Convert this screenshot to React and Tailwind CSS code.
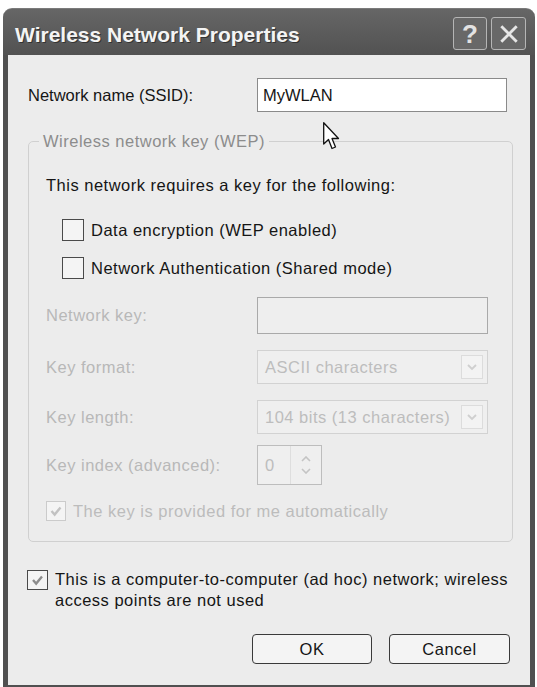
import React from "react";

const font = "font-['Liberation_Sans',Arial,sans-serif]";

const Check = ({ color }) => (
  <svg viewBox="0 0 20 20" className="h-full w-full">
    <polyline points="5,10 8.5,14 15,6" fill="none" stroke={color} strokeWidth="2.6" />
  </svg>
);

const CheckBox = ({ checked, disabled, className }) => (
  <div
    className={
      "shrink-0 border bg-[#f4f4f4] " +
      (disabled ? "border-[#cbcbcb] " : "border-[#4a4a4a] ") +
      className
    }
  >
    {checked && <Check color={disabled ? "#c2c2c2" : "#8c8c8c"} />}
  </div>
);

const Chevron = () => (
  <svg viewBox="0 0 12 8" className="h-[8px] w-[12px]">
    <polyline points="2,2 6,6 10,2" fill="none" stroke="#cfcfcf" strokeWidth="1.8" />
  </svg>
);

const DisabledSelect = ({ value, h }) => (
  <div className={"flex w-[231px] items-center justify-between border border-[#d2d2d2] bg-[#efefef] pl-[7px] pr-[4px] " + h}>
    <span className="text-[#bdbdbd]">{value}</span>
    <div className="flex h-[24px] w-[22px] items-center justify-center border border-[#dcdcdc] bg-[#f3f3f3]">
      <Chevron />
    </div>
  </div>
);

export default function App() {
  return (
    <div className={"relative min-h-[687px] bg-white pl-[3px] pt-[8px] text-[16.5px] text-[#151515] " + font}>
      <div className="flex h-[679px] w-[532px] flex-col">
        {/* title bar */}
        <div className="flex h-[47px] shrink-0 items-start justify-between rounded-t-[9px] border-t border-[#7a7a7a] bg-gradient-to-b from-[#666666] to-[#525252] pl-[12px] pr-[9px]">
          <span className="mt-[14px] text-[21px] font-bold leading-[24px] text-[#f4f4f4] [text-shadow:1px_1px_0_#333]">
            Wireless Network Properties
          </span>
          <div className="mt-[8px] flex gap-[4px]">
            <div className="flex h-[33px] w-[34px] items-center justify-center rounded-[3px] border border-[#b5b5b5] bg-[#686868] text-[26px] font-bold leading-none text-[#e2e2e2]">
              ?
            </div>
            <div className="flex h-[33px] w-[35px] items-center justify-center rounded-[3px] border border-[#b5b5b5] bg-[#686868]">
              <svg viewBox="0 0 20 20" className="h-[22px] w-[22px]">
                <path d="M3 3 L17 17 M17 3 L3 17" stroke="#e6e6e6" strokeWidth="2.6" />
              </svg>
            </div>
          </div>
        </div>

        {/* body */}
        <div className="flex flex-1 flex-col border-x-[5px] border-b-[2px] border-[#505050] bg-[#ececec] tracking-[0.5px]">
          <div className="mt-[23px] flex items-center pl-[20px]">
            <span className="w-[229px] tracking-normal">Network name (SSID):</span>
            <div className="flex h-[34px] w-[250px] items-center border border-[#8a8a8a] bg-white pl-[5px] tracking-normal">
              MyWLAN
            </div>
          </div>

          <fieldset className="ml-[20px] mr-[17px] mt-[19px] rounded-[5px] border border-[#d0d0d0]">
            <legend className="ml-[10px] px-[4px] leading-[20px] text-[#8c8c8c]">
              Wireless network key (WEP)
            </legend>
            <div className="flex flex-col pb-[20px] pl-[17px] pr-[24px]">
              <p className="mt-[24px] leading-[20px]">This network requires a key for the following:</p>

              <div className="mt-[24px] flex h-[22px] items-center gap-[7px] pl-[16px]">
                <CheckBox className="h-[22px] w-[22px]" />
                <span>Data encryption (WEP enabled)</span>
              </div>
              <div className="mt-[16px] flex h-[22px] items-center gap-[7px] pl-[16px]">
                <CheckBox className="h-[22px] w-[22px]" />
                <span>Network Authentication (Shared mode)</span>
              </div>

              <div className="mt-[18px] flex h-[37px] items-center">
                <span className="w-[211px] text-[#b8b8b8]">Network key:</span>
                <div className="h-full w-[231px] border border-[#a9a9a9] bg-[#eeeeee]" />
              </div>

              <div className="mt-[16px] flex items-center">
                <span className="w-[211px] text-[#b8b8b8]">Key format:</span>
                <DisabledSelect value="ASCII characters" h="h-[34px]" />
              </div>

              <div className="mt-[16px] flex items-center">
                <span className="w-[211px] text-[#b8b8b8]">Key length:</span>
                <DisabledSelect value="104 bits (13 characters)" h="h-[34px]" />
              </div>

              <div className="mt-[11px] flex items-center">
                <span className="w-[211px] text-[#b8b8b8]">Key index (advanced):</span>
                <div className="flex h-[40px] w-[65px] items-center border border-[#bdbdbd] bg-[#efefef]">
                  <span className="w-[32px] pl-[7px] text-[#bdbdbd]">0</span>
                  <div className="flex h-full flex-1 flex-col items-center justify-center gap-[6px] border-l border-[#dedede]">
                    <svg viewBox="0 0 10 6" className="h-[6px] w-[10px]">
                      <polyline points="1,5 5,1 9,5" fill="none" stroke="#c4c4c4" strokeWidth="1.6" />
                    </svg>
                    <svg viewBox="0 0 10 6" className="h-[6px] w-[10px]">
                      <polyline points="1,1 5,5 9,1" fill="none" stroke="#c4c4c4" strokeWidth="1.6" />
                    </svg>
                  </div>
                </div>
              </div>

              <div className="mt-[16px] flex h-[20px] items-center gap-[7px]">
                <CheckBox checked disabled className="h-[20px] w-[20px]" />
                <span className="text-[#bcbcbc]">The key is provided for me automatically</span>
              </div>
            </div>
          </fieldset>

          <div className="mt-[27px] flex items-start gap-[7px] pl-[19px]">
            <CheckBox checked className="mt-[1px] h-[20px] w-[21px]" />
            <p className="whitespace-nowrap leading-[21px]">
              This is a computer-to-computer (ad hoc) network; wireless
              <br />
              access points are not used
            </p>
          </div>

          <div className="mt-[23px] flex justify-end gap-[17px] pr-[20px]">
            <button className="h-[30px] w-[120px] rounded-[4px] border border-[#3a3a3a] bg-[#f4f4f4] text-[16.5px]">
              OK
            </button>
            <button className="h-[30px] w-[121px] rounded-[4px] border border-[#3a3a3a] bg-[#f4f4f4] text-[16.5px]">
              Cancel
            </button>
          </div>
        </div>
      </div>

      {/* mouse pointer */}
      <svg viewBox="0 0 17 28" className="absolute left-[323px] top-[122px] h-[28px] w-[17px]">
        <path d="M0.7 0.7 L0.7 22 L5.5 17.5 L9 26.5 L12.5 25 L9 16.5 L15.5 16.5 Z" fill="#fff" stroke="#111" strokeWidth="1.3" strokeLinejoin="round" />
      </svg>
    </div>
  );
}
